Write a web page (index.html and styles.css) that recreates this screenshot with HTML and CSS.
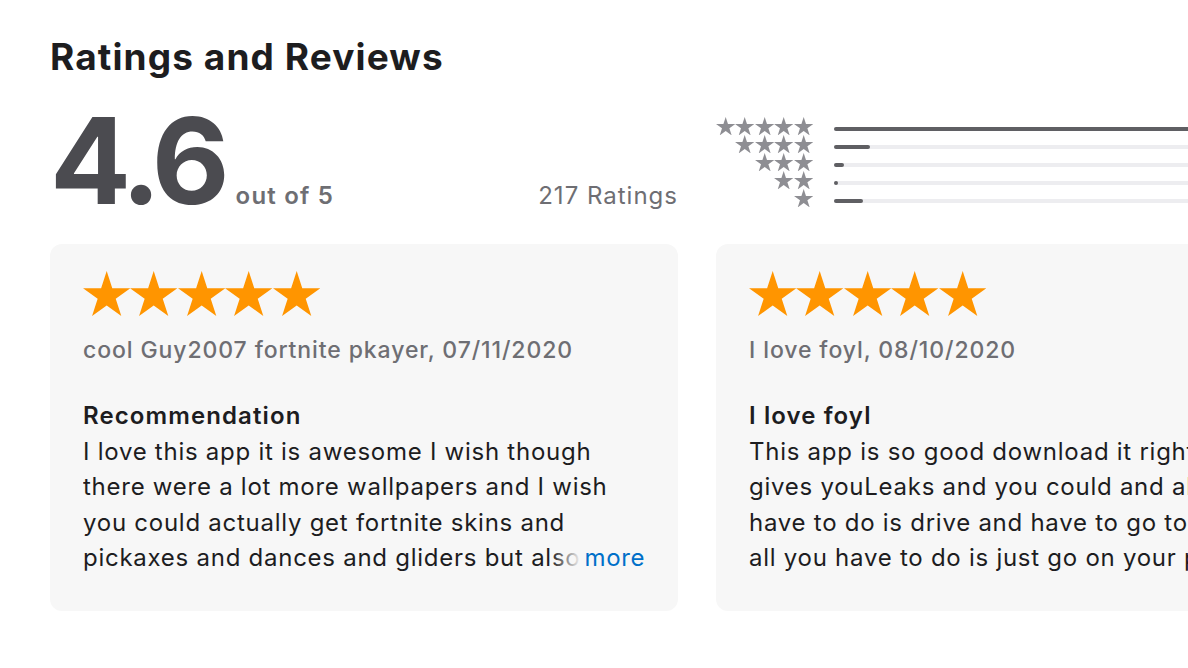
FILE: index.html
```html
<!DOCTYPE html>
<html lang="en">
<head>
<meta charset="utf-8">
<title>Ratings and Reviews</title>
<link rel="stylesheet" href="styles.css">
</head>
<body>
<svg class="defs" width="0" height="0" aria-hidden="true">
  <symbol id="star" viewBox="0 0 190.2 180.9">
    <polygon points="95.1,0 117.55,69.1 190.2,69.1 131.43,111.8 153.88,180.9 95.1,138.2 36.32,180.9 58.77,111.8 0,69.1 72.65,69.1"/>
  </symbol>
</svg>
<section class="reviews">
  <h2 class="title">Ratings and Reviews</h2>
  <div class="summary">
    <div class="score">
      <span class="big">4.6</span>
      <span class="outof">out of 5</span>
      <span class="count">217 Ratings</span>
    </div>
    <div class="histogram">
      <div class="hrow">
        <div class="hstars"><svg><use href="#star"/></svg><svg><use href="#star"/></svg><svg><use href="#star"/></svg><svg><use href="#star"/></svg><svg><use href="#star"/></svg></div>
        <div class="track"><div class="fill" style="width:100%"></div></div>
      </div>
      <div class="hrow">
        <div class="hstars"><svg><use href="#star"/></svg><svg><use href="#star"/></svg><svg><use href="#star"/></svg><svg><use href="#star"/></svg></div>
        <div class="track"><div class="fill" style="width:7%"></div></div>
      </div>
      <div class="hrow">
        <div class="hstars"><svg><use href="#star"/></svg><svg><use href="#star"/></svg><svg><use href="#star"/></svg></div>
        <div class="track"><div class="fill" style="width:2%"></div></div>
      </div>
      <div class="hrow">
        <div class="hstars"><svg><use href="#star"/></svg><svg><use href="#star"/></svg></div>
        <div class="track"><div class="fill" style="width:0.8%"></div></div>
      </div>
      <div class="hrow">
        <div class="hstars"><svg><use href="#star"/></svg></div>
        <div class="track"><div class="fill" style="width:5.7%"></div></div>
      </div>
    </div>
  </div>
  <div class="cards">
    <article class="card">
      <div class="stars"><svg><use href="#star"/></svg><svg><use href="#star"/></svg><svg><use href="#star"/></svg><svg><use href="#star"/></svg><svg><use href="#star"/></svg></div>
      <div class="author">cool Guy2007 fortnite pkayer, 07/11/2020</div>
      <h3 class="rtitle">Recommendation</h3>
      <div class="body">
        <p>I love this app it is awesome I wish though there were a lot more wallpapers and I wish you could actually get fortnite skins and pickaxes and dances and gliders but also more emotes and more things to do in the app</p>
        <a class="more" href="#">more</a>
      </div>
    </article>
    <article class="card">
      <div class="stars"><svg><use href="#star"/></svg><svg><use href="#star"/></svg><svg><use href="#star"/></svg><svg><use href="#star"/></svg><svg><use href="#star"/></svg></div>
      <div class="author">I love foyl, 08/10/2020</div>
      <h3 class="rtitle">I love foyl</h3>
      <div class="body">
        <p>This app is so good download it right now it<br>gives youLeaks and you could and all you<br>have to do is drive and have to go to the<br>all you have to do is just go on your phone</p>
        <a class="more" href="#">more</a>
      </div>
    </article>
  </div>
</section>
</body>
</html>
```
FILE: styles.css
```css
html, body {
  margin: 0;
  padding: 0;
  background: #ffffff;
  overflow: hidden;
}

body {
  width: 1188px;
  height: 668px;
  font-family: Inter, "Liberation Sans", sans-serif;
  color: #1d1d1f;
}

.defs {
  position: absolute;
  width: 0;
  height: 0;
}

.reviews {
  padding-left: 50px;
  width: 1400px;
}

.title {
  margin: 35px 0 0;
  font-size: 37px;
  line-height: 44px;
  font-weight: 700;
  letter-spacing: 1.1px;
  color: #1d1d1f;
}

.summary {
  display: grid;
  grid-template-columns: 628px 628px;
  column-gap: 38px;
  margin-top: 22px;
}

.score {
  display: flex;
  align-items: baseline;
  height: 120px;
}

.big {
  font-size: 120px;
  line-height: 120px;
  font-weight: 700;
  letter-spacing: -6px;
  color: #4b4b50;
}

.outof {
  margin-left: 12px;
  font-size: 24px;
  font-weight: 600;
  letter-spacing: 1.2px;
  color: #6e6e73;
}

.count {
  margin-left: auto;
  font-size: 24px;
  font-weight: 400;
  letter-spacing: 1px;
  color: #6e6e73;
}

.histogram {
  margin-top: 16px;
  display: flex;
  flex-direction: column;
}

.hrow {
  display: flex;
  align-items: center;
  height: 18px;
}

.hstars {
  width: 97px;
  display: flex;
  justify-content: flex-end;
  fill: #8e8e93;
}

.hstars svg {
  width: 19.4px;
  height: 18.4px;
  display: block;
}

.track {
  flex: 1;
  height: 4px;
  margin-left: 21px;
  margin-top: 6px;
  border-radius: 2px;
  background: #ededf0;
}

.fill {
  height: 4px;
  border-radius: 2px;
  background: #5f5f63;
}

.cards {
  display: grid;
  grid-template-columns: 628px 628px;
  column-gap: 38px;
  margin-top: 23px;
}

.card {
  box-sizing: border-box;
  height: 367px;
  padding: 27px 33px 0;
  border-radius: 12px;
  background: #f7f7f7;
}

.stars {
  display: flex;
  fill: #ff9500;
}

.stars svg {
  width: 47.4px;
  height: 45px;
  display: block;
}

.author {
  margin-top: 17px;
  font-size: 23px;
  line-height: 35.5px;
  font-weight: 500;
  letter-spacing: 0.9px;
  color: #6e6e73;
}

.rtitle {
  margin: 29.5px 0 0;
  font-size: 24px;
  line-height: 35.5px;
  font-weight: 600;
  letter-spacing: 1.1px;
  color: #1d1d1f;
}

.body {
  position: relative;
  max-height: 142px;
  overflow: hidden;
}

.body p {
  margin: 0;
  font-size: 24px;
  line-height: 35.5px;
  font-weight: 400;
  letter-spacing: 0.74px;
  color: #1d1d1f;
}

.more {
  position: absolute;
  right: 0;
  bottom: 0;
  padding-left: 34px;
  font-size: 24px;
  line-height: 35.5px;
  letter-spacing: 0.6px;
  color: #0070c9;
  text-decoration: none;
  background: linear-gradient(to right, rgba(247, 247, 247, 0), #f7f7f7 30px);
}
```
